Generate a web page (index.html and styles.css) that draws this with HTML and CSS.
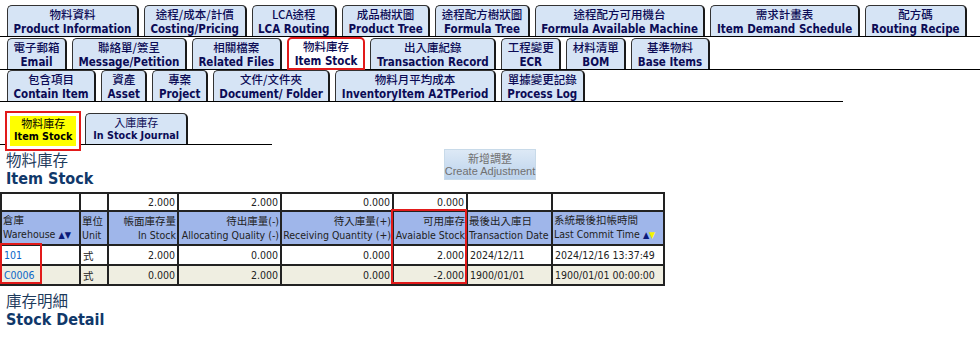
FILE: index.html
```html
<!DOCTYPE html>
<html lang="zh-Hant">
<head>
<meta charset="utf-8">
<title>Item Stock</title>
<link rel="stylesheet" href="styles.css">
</head>
<body>
<div class="tabs">
  <div class="tabrow">
    <div class="tab"><span class="zh">物料資料</span><span class="en">Product Information</span></div>
    <div class="tab"><span class="zh">途程/成本/計價</span><span class="en">Costing/Pricing</span></div>
    <div class="tab"><span class="zh">LCA途程</span><span class="en">LCA Routing</span></div>
    <div class="tab"><span class="zh">成品樹狀圖</span><span class="en">Product Tree</span></div>
    <div class="tab"><span class="zh">途程配方樹狀圖</span><span class="en">Formula Tree</span></div>
    <div class="tab"><span class="zh">途程配方可用機台</span><span class="en">Formula Available Machine</span></div>
    <div class="tab"><span class="zh">需求計畫表</span><span class="en">Item Demand Schedule</span></div>
    <div class="tab"><span class="zh">配方碼</span><span class="en">Routing Recipe</span></div>
  </div>
  <div class="tabrow">
    <div class="tab"><span class="zh">電子郵箱</span><span class="en">Email</span></div>
    <div class="tab"><span class="zh">聯絡單/簽呈</span><span class="en">Message/Petition</span></div>
    <div class="tab"><span class="zh">相關檔案</span><span class="en">Related Files</span></div>
    <div class="tab active"><span class="zh">物料庫存</span><span class="en">Item Stock</span></div>
    <div class="tab"><span class="zh">出入庫紀錄</span><span class="en">Transaction Record</span></div>
    <div class="tab"><span class="zh">工程變更</span><span class="en">ECR</span></div>
    <div class="tab"><span class="zh">材料清單</span><span class="en">BOM</span></div>
    <div class="tab"><span class="zh">基準物料</span><span class="en">Base Items</span></div>
  </div>
  <div class="tabrow short">
    <div class="tab"><span class="zh">包含項目</span><span class="en">Contain Item</span></div>
    <div class="tab"><span class="zh">資產</span><span class="en">Asset</span></div>
    <div class="tab"><span class="zh">專案</span><span class="en">Project</span></div>
    <div class="tab"><span class="zh">文件/文件夾</span><span class="en">Document/ Folder</span></div>
    <div class="tab"><span class="zh">物料月平均成本</span><span class="en">InventoryItem A2TPeriod</span></div>
    <div class="tab"><span class="zh">單據變更記錄</span><span class="en">Process Log</span></div>
  </div>
</div>

<div class="subtabs">
  <div class="subtab current"><span class="zh">物料庫存</span><span class="en">Item Stock</span></div>
  <div class="subtab"><span class="zh">入庫庫存</span><span class="en">In Stock Journal</span></div>
</div>

<div class="titlebar">
  <div class="title">
    <div class="title-zh">物料庫存</div>
    <div class="title-en">Item Stock</div>
  </div>
  <button class="btn" type="button"><span class="btn-zh">新增調整</span><span>Create Adjustment</span></button>
  <div></div>
</div>

<div class="gridwrap">
  <table class="grid">
    <colgroup>
      <col class="c1"><col class="c2"><col class="c3"><col class="c4"><col class="c5"><col class="c6"><col class="c7"><col class="c8">
    </colgroup>
    <tr class="totals">
      <td></td><td></td><td class="num">2.000</td><td class="num">2.000</td><td class="num">0.000</td><td class="num">0.000</td><td></td><td></td>
    </tr>
    <tr class="head">
      <th>倉庫<br>Warehouse <span class="arr">▲▼</span></th>
      <th>單位<br>Unit</th>
      <th class="num">帳面庫存量<br>In Stock</th>
      <th class="num">待出庫量(-)<br>Allocating Quality (-)</th>
      <th class="num">待入庫量(+)<br>Receiving Quantity (+)</th>
      <th class="num">可用庫存<br>Avaiable Stock</th>
      <th>最後出入庫日<br>Transaction Date</th>
      <th>系統最後扣帳時間<br>Last Commit Time <span class="arr">▲</span><span class="arr yel">▼</span></th>
    </tr>
    <tr>
      <td><a href="#">101</a></td><td>式</td><td class="num">2.000</td><td class="num">0.000</td><td class="num">0.000</td><td class="num">2.000</td><td>2024/12/11</td><td>2024/12/16 13:37:49</td>
    </tr>
    <tr class="alt">
      <td><a href="#">C0006</a></td><td>式</td><td class="num">0.000</td><td class="num">2.000</td><td class="num">0.000</td><td class="num">-2.000</td><td>1900/01/01</td><td>1900/01/01 00:00:00</td>
    </tr>
  </table>
  <div class="mark mark-wh"></div>
  <div class="mark mark-av"></div>
</div>

<div class="title detail">
  <div class="title-zh">庫存明細</div>
  <div class="title-en">Stock Detail</div>
</div>
</body>
</html>
```
FILE: styles.css
```css
* { box-sizing: border-box; }
body {
  margin: 0;
  background: #fff;
  color: #000;
  font-family: "DejaVu Sans Condensed", "DejaVu Sans", "Noto Sans CJK TC", sans-serif;
}
.tabs { padding-top: 5px; }
.tabrow {
  display: flex;
  align-items: flex-end;
  gap: 5px;
  padding-left: 7px;
  border-bottom: 1px solid #000;
}
.tabrow.short { width: 843px; }
.tab {
  display: flex;
  flex-direction: column;
  align-items: center;
  height: 31px;
  padding: 1px 5.5px 0;
  background: #d6e4f5;
  border: 1px solid #333;
  border-right: 2px solid #1a1a1a;
  border-bottom: none;
  border-radius: 5px 5px 0 0;
  color: #0b0b55;
  font-size: 11.5px;
  line-height: 15px;
  white-space: nowrap;
}
.tab .zh { font-family: "Noto Sans CJK TC", sans-serif; font-weight: 500; font-size: 11.5px; }
.tab .en { font-weight: bold; }
.tab.active {
  background: #fff;
  border: 2px solid #e21a1a;
  height: 33px;
  margin-bottom: -1px;
  padding: 0 6px;
  position: relative;
}

.subtabs {
  display: flex;
  align-items: flex-end;
  gap: 4px;
  width: 272px;
  margin-top: 9px;
  padding-left: 5px;
  border-bottom: 1px solid #000;
}
.subtab {
  display: flex;
  flex-direction: column;
  align-items: center;
  height: 31px;
  padding: 1px 7px 0;
  background: #d6e4f5;
  border: 1px solid #333;
  border-right: 2px solid #1a1a1a;
  border-bottom: none;
  border-radius: 5px 5px 0 0;
  color: #0b0b55;
  font-size: 10.7px;
  line-height: 14px;
  white-space: nowrap;
}
.subtab .zh { font-family: "Noto Sans CJK TC", sans-serif; font-size: 11px; }
.subtab .en { font-weight: bold; }
.subtab.current {
  background: #ffff00;
  border: 2px solid #e21a1a;
  border-radius: 0;
  box-shadow: inset 0 0 0 3px #fff;
  height: 40px;
  margin-bottom: -7px;
  padding: 3px 7px 0;
  color: #000;
  position: relative;
}

.titlebar {
  display: grid;
  grid-template-columns: 1fr auto 1fr;
  align-items: start;
  margin-top: 5px;
}
.title { padding-left: 6px; }
.title-zh {
  font-family: "Noto Sans CJK TC", sans-serif;
  font-size: 15.5px;
  line-height: 19px;
  color: #1d3a5c;
}
.title-en {
  font-weight: bold;
  font-size: 16px;
  line-height: 19px;
  color: #10386a;
}
.btn {
  display: flex;
  flex-direction: column;
  align-items: center;
  width: 92px;
  height: 31px;
  margin-top: -1px;
  padding: 2px 0 0;
  border: 1px solid #c8dae9;
  background: linear-gradient(#dde9f6, #bcd3ec);
  color: #707070;
  font-family: "Liberation Sans", "Noto Sans CJK TC", sans-serif;
  font-size: 11px;
  line-height: 13px;
  white-space: nowrap;
}
.btn-zh { font-family: "Noto Sans CJK TC", sans-serif; font-size: 11px; }

.gridwrap {
  position: relative;
  width: 663px;
  margin-top: 4px;
}
.grid {
  width: 663px;
  border-collapse: separate;
  border-spacing: 0;
  border: 1px solid #222;
  font-family: "DejaVu Sans Condensed", "DejaVu Sans", "Noto Sans CJK TC", sans-serif;
  font-size: 10.5px;
  color: #222;
  table-layout: fixed;
}
.grid col.c1 { width: 79px; }
.grid col.c2 { width: 28px; }
.grid col.c3 { width: 70px; }
.grid col.c4 { width: 103px; }
.grid col.c5 { width: 112px; }
.grid col.c6 { width: 74px; }
.grid col.c7 { width: 85px; }
.grid col.c8 { width: 112px; }
.grid td, .grid th {
  border: 1px solid #222;
  padding: 0 2px;
  white-space: nowrap;
  overflow: hidden;
  text-align: left;
  font-weight: normal;
}
.grid .num { text-align: right; }
.grid tr.totals td { height: 18px; }
.grid tr.head th {
  height: 34px;
  background: #9fb6ea;
  line-height: 14px;
  vertical-align: bottom;
  padding: 0 1px 2px;
}
.grid tr td { height: 20px; }
.grid tr.alt td { background: #efeee1; }
.grid a { color: #0a66c8; text-decoration: none; }
.arr { color: #0a1a7a; font-size: 9px; }
.arr.yel { color: #f4f400; }

.mark {
  position: absolute;
  border: 2px solid #e21a1a;
  pointer-events: none;
}
.mark-wh { left: 0; top: 51px; width: 42px; height: 41px; }
.mark-av { left: 391px; top: 17px; width: 76px; height: 75px; }

.detail { margin-top: 5px; }
```
